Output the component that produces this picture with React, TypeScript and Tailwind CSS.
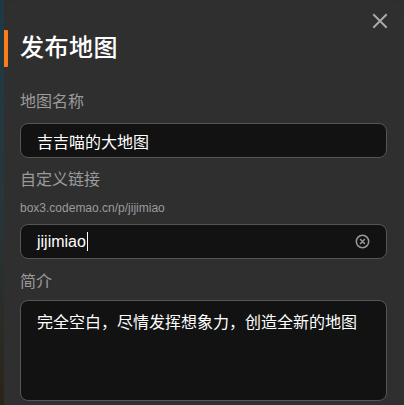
import React from 'react';

const font = { fontFamily: '"PingFang SC", "Noto Sans CJK SC", "Noto Sans", sans-serif' };
const latin = { fontFamily: '"Liberation Sans", Arial, sans-serif' };

const ClearIcon = () => (
  <svg width="15" height="15" viewBox="0 0 16 16" fill="none" stroke="#9a9a9a" strokeWidth="1.6" strokeLinecap="round">
    <circle cx="8" cy="8" r="6.6" />
    <path d="M5.9 5.9l4.2 4.2M10.1 5.9l-4.2 4.2" />
  </svg>
);

const App: React.FC = () => {
  return (
    <div className="w-[404px] h-[405px] overflow-hidden flex bg-[#2e2e2e]" style={font}>
      {/* what shows behind the dialog */}
      <div className="w-[4px] h-full bg-gradient-to-b from-[#1c3a44] via-[#27363a] to-[#2b2418]" />
      <div className="relative flex-1 h-full bg-[#2f2f2f] rounded-tl-[14px] rounded-tr-[14px]">
        <button className="absolute right-[16px] top-[13px] text-[#a8a8a8]">
          <svg width="16" height="16" viewBox="0 0 16 16" stroke="currentColor" strokeWidth="2" strokeLinecap="square">
            <path d="M2 2l12 12M14 2L2 14" />
          </svg>
        </button>

        <div className="flex items-center h-[37px] mt-[30px]">
          <div className="w-[4px] h-full bg-[#ff7a1a] rounded-r-[1px]" />
          <h1 className="ml-[12px] mb-[5px] text-[24px] leading-[32px] font-medium text-white tracking-[0.5px]">发布地图</h1>
        </div>

        <div className="flex flex-col pl-[16px] pr-[17px]">
          <label className="mt-[22px] text-[16px] leading-[22px] text-[#9b9b9b]">地图名称</label>
          <div className="mt-[12px] h-[35px] flex items-center rounded-[8px] border border-[#555] bg-[#121212] px-[16px]">
            <span className="text-[16px] text-white">吉吉喵的大地图</span>
          </div>

          <label className="mt-[9px] text-[16px] leading-[22px] text-[#9b9b9b]">自定义链接</label>
          <div className="mt-[11px] text-[12px] leading-[16px] text-[#9b9b9b]" style={latin}>
            box3.codemao.cn/p/jijimiao
          </div>
          <div className="mt-[8px] h-[35px] flex items-center justify-between rounded-[8px] border border-[#555] bg-[#121212] pl-[16px] pr-[16px]">
            <span className="text-[16px] text-white flex items-center" style={latin}>
              jijimiao
              <span className="inline-block w-[1px] h-[19px] bg-white ml-[1px]" />
            </span>
            <ClearIcon />
          </div>

          <label className="mt-[10px] text-[16px] leading-[22px] text-[#9b9b9b]">简介</label>
          <div className="mt-[9px] h-[101px] rounded-[8px] border border-[#555] bg-[#121212] px-[16px] pt-[9px]">
            <p className="text-[16px] leading-[22px] text-white">完全空白，尽情发挥想象力，创造全新的地图</p>
          </div>
        </div>
      </div>
    </div>
  );
};

export default App;
